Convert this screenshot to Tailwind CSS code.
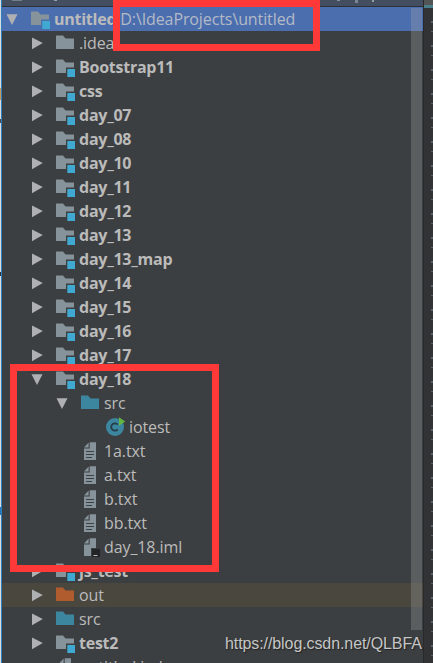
<!DOCTYPE html>
<html lang="en">
<head>
    <meta charset="UTF-8">
    <meta name="viewport" content="width=device-width, initial-scale=1.0">
    <title>Project tree</title>
    <script src="https://cdn.jsdelivr.net/npm/@tailwindcss/browser@4"></script>
</head>
<body class="relative flex h-[663px] w-[433px] overflow-hidden bg-[#3c3f41] font-['Open_Sans','Noto_Sans',sans-serif]">
    <!-- Icon set shared by the rows -->
    <svg class="hidden">
        <symbol id="right" viewBox="0 0 25 24"><path d="M1 6.5 11.8 12 1 18.3Z" fill="#afb0b2"/></symbol>
        <symbol id="down" viewBox="0 0 25 24"><path d="M.5 7.3H11.5L6 18Z" fill="#afb0b2"/></symbol>
        <symbol id="folder" viewBox="0 0 23 24"><path d="M0 4.5H7L9.5 7.5H18V18H0Z" fill="currentColor"/></symbol>
        <symbol id="module" viewBox="0 0 23 24">
            <path d="M0 4.5H7L9.5 7.5H18V12.5H10V18H0Z" fill="#87939a"/>
            <path d="M11.3 14H19V22H11.3Z" fill="#40a9d2"/>
        </symbol>
        <symbol id="text" viewBox="0 0 23 24">
            <path d="M3 9.5H8.7V3.3H15V21H3Z M3 8.4 7.6 3.6V8.4Z" fill="#87939a"/>
            <path d="M5 12.5H13M5 15.5H13M5 18.5H11" stroke="#3c3f41"/>
        </symbol>
        <symbol id="iml" viewBox="0 0 23 24">
            <path d="M3 9.5H8.7V3.3H15V13H10V21H3Z M3 8.4 7.6 3.6V8.4Z" fill="#87939a"/>
            <path d="M11 14H19V22H11Z" fill="#222425"/>
            <path d="M12.5 20.5H16.5" stroke="#c4c4c4"/>
        </symbol>
        <symbol id="class" viewBox="0 0 23 24">
            <circle cx="9" cy="12" r="9" fill="#3c86a0"/>
            <path d="M11.7 9.6A3.7 3.7 0 1 0 11.7 14.4" fill="none" stroke="#263d47" stroke-width="1.8"/>
            <path d="M13 2.2 19.2 6.5 13 10.8Z" fill="#62b543"/>
        </symbol>
    </svg>

    <!-- Slice of the window behind -->
    <div class="flex w-[2px] shrink-0 flex-col border-r border-[#2c7fc0] bg-[#dcdcdc]">
        <div class="mt-[88px] h-3 bg-[#c89a55]"></div>
        <div class="mt-[19px] h-1 bg-[#4b4b52]"></div>
        <div class="mt-[149px] h-1 bg-[#30323c]"></div>
        <div class="mt-[231px] h-2 bg-[#2674b8]"></div>
    </div>

    <main class="flex w-[421px] shrink-0 flex-col">
        <!-- Bottom edge of the toolbar -->
        <div class="flex h-[7px] shrink-0 items-start border-b border-[#2d3135] bg-[#434e60]">
            <div class="ml-[10px] h-px w-[10px] bg-[#777d85]"></div>
            <div class="ml-[32px] h-px w-[3px] bg-[#9a9da1]"></div>
            <div class="ml-[280px] h-px w-[3px] bg-[#8b929c]"></div>
            <div class="ml-[15px] h-[3px] w-[3px] bg-[#7c8591]"></div>
            <div class="ml-[14px] h-[2px] w-[2px] bg-[#9a9da1]"></div>
        </div>
        <div id="tree" class="flex flex-col"></div>
    </main>

    <!-- Editor gutter -->
    <aside class="flex w-[10px] shrink-0 flex-col border-l border-[#27292a] bg-[#313335]">
        <div class="h-[5px] bg-[#525655]"></div>
        <div class="h-[3px] bg-[#4a7e8a]"></div>
        <div id="ticks" class="flex flex-col items-end"></div>
    </aside>

    <!-- Scrollbar thumb -->
    <div class="absolute left-[411px] top-2 h-[622px] w-[11px] bg-[#a6a6a6]/30"></div>

    <!-- Highlight boxes -->
    <div class="absolute left-[113px] top-0 h-[51px] w-[207px] border-[7px] border-[#ff3838]"></div>
    <div class="absolute left-[10px] top-[364px] h-[208px] w-[209px] border-[7px] border-[#ff3838]"></div>

    <div class="absolute left-[225px] top-[632px] whitespace-nowrap font-['Liberation_Sans',sans-serif] text-[16px] leading-6 tracking-[-0.09px] text-[#c5c6c6] [text-shadow:1px_1px_1px_#222]">https://blog.csdn.net/QLBFA</div>

    <script>
        // [depth, arrow, icon, label, bold]
        const rows = [
            [0, 'down', 'module', 'untitled', true],
            [1, 'right', 'folder', '.idea'],
            [1, 'right', 'module', 'Bootstrap11', true],
            [1, 'right', 'module', 'css', true],
            ...['07', '08', '10', '11', '12', '13', '13_map', '14', '15', '16', '17'].map(n => [1, 'right', 'module', 'day_' + n, true]),
            [1, 'down', 'module', 'day_18', true],
            [2, 'down', 'source', 'src'],
            [3, '', 'class', 'iotest'],
            [2, '', 'text', '1a.txt'],
            [2, '', 'text', 'a.txt'],
            [2, '', 'text', 'b.txt'],
            [2, '', 'text', 'bb.txt'],
            [2, '', 'iml', 'day_18.iml'],
            [1, 'right', 'module', 'js_test', true],
            [1, 'right', 'out', 'out'],
            [1, 'right', 'source', 'src'],
            [1, 'right', 'module', 'test2', true],
            [1, '', 'iml', 'untitled.iml'],
        ];
        const indents = ['pl-[4px]', 'pl-[29px]', 'pl-[54px]', 'pl-[79px]'];
        const colors = { folder: 'text-[#87939a]', source: 'text-[#3d86a0]', out: 'text-[#b05c2e]' };

        document.getElementById('tree').innerHTML = rows.map(([depth, arrow, icon, label, bold], i) => {
            const bg = i === 0 ? 'bg-[#4b6eaf]' : icon === 'out' ? 'bg-[#4a473f]' : '';
            const shape = colors[icon] ? 'folder' : icon;
            const path = i === 0 ? '<span class="ml-[4px] text-[16px] tracking-[-0.1px] text-[#b4bac6]">D:\\IdeaProjects\\untitled</span>' : '';
            return `<div class="flex h-6 shrink-0 items-center whitespace-nowrap ${indents[depth]} ${bg}">
                <svg class="h-6 w-[25px] shrink-0">${arrow ? `<use href="#${arrow}"/>` : ''}</svg>
                <svg class="h-6 w-[23px] shrink-0 ${colors[icon] || ''}"><use href="#${shape}"/></svg>
                <span class="text-[16px] leading-6 text-[#bbbbbb] ${bold ? 'font-bold tracking-[-0.25px]' : 'tracking-[-0.1px]'}">${label}</span>${path}
            </div>`;
        }).join('');

        // Faint marks down the gutter, two per line
        document.getElementById('ticks').innerHTML = Array.from({ length: 27 }, () =>
            '<div class="mt-[13px] h-[2px] w-[2px] bg-[#566068]"></div><div class="mt-[8px] h-px w-[2px] bg-[#566068]"></div>').join('');
    </script>
</body>
</html>
